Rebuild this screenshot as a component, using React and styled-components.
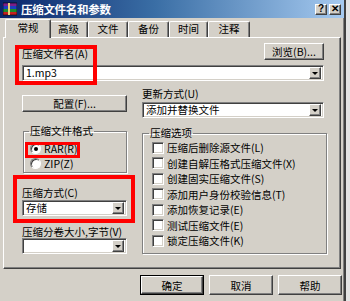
import React from 'react'
import styled, { createGlobalStyle } from 'styled-components'

const Global = createGlobalStyle`
  body {
    margin: 0;
    background: #e4e4e4;
    font-family: "Noto Sans CJK SC", "Noto Sans", sans-serif;
    font-size: 10.5px;
    color: #000;
  }
`

const raised = `
  border: 1px solid;
  border-color: #fff #404040 #404040 #fff;
  box-shadow: inset -1px -1px #808080;
`

const sunken = `
  border: 1px solid;
  border-color: #808080 #fff #fff #808080;
  box-shadow: inset 1px 1px #404040, inset -1px -1px #d4d0c8;
`

const S = {
  Window: styled.div`
    width: 346px;
    height: 301px;
    box-sizing: border-box;
    background: #d4d0c8;
    border-right: 2px solid #404040;
    box-shadow: inset -1px 0 #808080;
    overflow: hidden;
  `,
  TitleBar: styled.div`
    height: 18px;
    width: 344px;
    display: flex;
    align-items: center;
    padding: 0 3px 0 3px;
    box-sizing: border-box;
    background: linear-gradient(90deg, #0a246a 0%, #3a6ea5 45%, #a6caf0 100%);
  `,
  TitleText: styled.div`
    flex: 1;
    margin-left: 4px;
    color: #fff;
    font-weight: bold;
    font-size: 11.5px;
    line-height: 18px;
    letter-spacing: -0.3px;
  `,
  TitleBtn: styled.div`
    width: 12px;
    height: 11px;
    box-sizing: border-box;
    background: #d4d0c8;
    ${raised}
    display: flex;
    align-items: center;
    justify-content: center;
    font-family: "Liberation Sans", sans-serif;
    font-weight: bold;
    font-size: 10px;
    line-height: 1;
    margin-left: ${p => p.$gap || 0}px;
  `,
  Body: styled.div`
    padding: 0 3px;
  `,
  Tabs: styled.div`
    height: 18px;
    margin-top: 1px;
    padding-left: 4px;
    display: flex;
    align-items: flex-end;
    position: relative;
    z-index: 1;
  `,
  Tab: styled.div`
    width: ${p => p.$w}px;
    height: ${p => (p.$active ? 19 : 16)}px;
    box-sizing: border-box;
    margin: ${p => (p.$active ? '0 -2px -1px -2px' : '0')};
    padding-top: ${p => (p.$active ? 1 : 0)}px;
    background: #d4d0c8;
    border-top: 1px solid #fff;
    border-left: 1px solid #fff;
    border-right: 1px solid #404040;
    box-shadow: inset -1px 0 #808080;
    border-radius: 2px 2px 0 0;
    text-align: center;
    line-height: 14px;
    position: relative;
    z-index: ${p => (p.$active ? 2 : 0)};
  `,
  Panel: styled.div`
    position: relative;
    width: 338px;
    height: 232px;
    box-sizing: border-box;
    padding: 5px 16px 0 18px;
    border-top: 1px solid #fff;
    border-left: 1px solid #fff;
    border-right: 1px solid #404040;
    border-bottom: 1px solid #404040;
    box-shadow: inset -1px -1px #808080;
  `,
  TopRow: styled.div`
    height: 17px;
    display: flex;
    align-items: flex-end;
    justify-content: space-between;
  `,
  Label: styled.div`
    line-height: 13px;
    height: 13px;
    white-space: nowrap;
    margin-top: ${p => p.$mt || 0}px;
  `,
  Button: styled.div`
    width: ${p => p.$w}px;
    height: ${p => p.$h || 17}px;
    box-sizing: border-box;
    background: #d4d0c8;
    ${raised}
    display: flex;
    align-items: center;
    justify-content: center;
    white-space: nowrap;
    margin-top: ${p => p.$mt || 0}px;
  `,
  DefaultButton: styled.div`
    width: 64px;
    height: 20px;
    box-sizing: border-box;
    border: 1px solid #000;
    display: flex;
  `,
  DefaultInner: styled.div`
    flex: 1;
    background: #d4d0c8;
    ${raised}
    display: flex;
    align-items: center;
    justify-content: center;
  `,
  Field: styled.div`
    height: 16px;
    box-sizing: border-box;
    background: #fff;
    ${sunken}
    display: flex;
    align-items: center;
    padding: 0 2px 0 3px;
    margin-top: ${p => p.$mt || 0}px;
  `,
  FieldText: styled.div`
    flex: 1;
    white-space: nowrap;
    line-height: 14px;
  `,
  Arrow: styled.div`
    width: 12px;
    height: 12px;
    flex: none;
    box-sizing: border-box;
    background: #d4d0c8;
    ${raised}
    display: flex;
    align-items: center;
    justify-content: center;
    &::after {
      content: '';
      border-left: 3px solid transparent;
      border-right: 3px solid transparent;
      border-top: 3px solid #000;
    }
  `,
  MidRow: styled.div`
    display: grid;
    grid-template-columns: 105px 1fr;
    column-gap: 15px;
    margin-top: 6px;
    align-items: start;
  `,
  Column: styled.div`
    display: flex;
    flex-direction: column;
  `,
  LowRow: styled.div`
    display: grid;
    grid-template-columns: 105px 1fr;
    column-gap: 15px;
    margin-top: 7px;
    align-items: start;
  `,
  Group: styled.fieldset`
    margin: ${p => p.$m};
    padding: ${p => p.$p};
    min-width: 0;
    border: 1px solid #808080;
    box-shadow: inset 1px 1px #fff, 1px 1px #fff;
  `,
  Legend: styled.legend`
    padding: 0 1px;
    margin-left: ${p => p.$ml}px;
    line-height: 12px;
    height: 12px;
  `,
  Choice: styled.div`
    height: ${p => p.$h}px;
    display: flex;
    align-items: center;
    gap: 3px;
    white-space: nowrap;
  `,
  RadioBox: styled.span`
    width: 11px;
    height: 11px;
    box-sizing: border-box;
    border-radius: 50%;
    background: #fff;
    border: 1px solid;
    border-color: #808080 #fff #fff #808080;
    box-shadow: inset 1px 1px #404040;
    display: flex;
    align-items: center;
    justify-content: center;
    &::after {
      content: '';
      width: 4px;
      height: 4px;
      border-radius: 50%;
      background: ${p => (p.$on ? '#000' : 'transparent')};
    }
  `,
  CheckBox: styled.span`
    width: 12px;
    height: 12px;
    box-sizing: border-box;
    background: #fff;
    ${sunken}
    flex: none;
  `,
  Footer: styled.div`
    display: flex;
    justify-content: flex-end;
    gap: 5px;
    margin-top: 6px;
    margin-right: -1px;
    width: 339px;
  `,
  Mark: styled.div`
    position: absolute;
    left: ${p => p.$x}px;
    top: ${p => p.$y}px;
    width: ${p => p.$w}px;
    height: ${p => p.$h}px;
    box-sizing: border-box;
    border: ${p => p.$b || 3}px solid #f00;
    pointer-events: none;
  `,
}

const RarIcon = () => (
  <svg width="14" height="14" viewBox="0 0 14 14">
    <rect x="0" y="1" width="14" height="3" fill="#7a1f8a" />
    <rect x="0" y="4" width="14" height="3" fill="#1c3fbf" />
    <rect x="0" y="7" width="14" height="3" fill="#1c8a2a" />
    <rect x="0" y="10" width="14" height="3" fill="#c42020" />
    <rect x="0" y="1" width="14" height="12" fill="none" stroke="#000" strokeWidth="0.6" />
    <rect x="5" y="1" width="2" height="12" fill="#e8d27a" />
  </svg>
)

const Combo = ({ text, mt }) => (
  <S.Field $mt={mt}>
    <S.FieldText>{text}</S.FieldText>
    <S.Arrow />
  </S.Field>
)

const tabs = [
  { t: '常规', w: 42 },
  { t: '高级', w: 39 },
  { t: '文件', w: 40 },
  { t: '备份', w: 41 },
  { t: '时间', w: 39 },
  { t: '注释', w: 42 },
]

const options = [
  '压缩后删除源文件(L)',
  '创建自解压格式压缩文件(X)',
  '创建固实压缩文件(S)',
  '添加用户身份校验信息(T)',
  '添加恢复记录(E)',
  '测试压缩文件(E)',
  '锁定压缩文件(K)',
]

const App = () => (
  <>
    <Global />
    <S.Window>
      <S.TitleBar>
        <RarIcon />
        <S.TitleText>压缩文件名和参数</S.TitleText>
        <S.TitleBtn>?</S.TitleBtn>
        <S.TitleBtn $gap={2}>✕</S.TitleBtn>
      </S.TitleBar>
      <S.Body>
        <S.Tabs>
          {tabs.map((tab, i) => (
            <S.Tab key={tab.t} $w={tab.w + (i === 0 ? 4 : 0)} $active={i === 0}>
              {tab.t}
            </S.Tab>
          ))}
        </S.Tabs>
        <S.Panel>
          <S.TopRow>
            <S.Label>压缩文件名(A)</S.Label>
            <S.Button $w={60}>浏览(B)...</S.Button>
          </S.TopRow>
          <Combo text="1.mp3" mt={5} />
          <S.MidRow>
            <S.Button $w={105} $mt={8}>配置(F)...</S.Button>
            <S.Column>
              <S.Label>更新方式(U)</S.Label>
              <Combo text="添加并替换文件" mt={2} />
            </S.Column>
          </S.MidRow>
          <S.LowRow>
            <S.Column>
              <S.Group $m="0 0 0 1px" $p="4px 4px 1px 6px">
                <S.Legend $ml={-1}>压缩文件格式</S.Legend>
                <S.Choice $h={15}>
                  <S.RadioBox $on />
                  RAR(R)
                </S.Choice>
                <S.Choice $h={15}>
                  <S.RadioBox />
                  ZIP(Z)
                </S.Choice>
              </S.Group>
              <S.Label $mt={13}>压缩方式(C)</S.Label>
              <Combo text="存储" mt={1} />
              <S.Label $mt={9}>压缩分卷大小,字节(V)</S.Label>
              <Combo text="" />
            </S.Column>
            <S.Group $m="2px -3px 0 0" $p="1px 4px 4px 9px">
              <S.Legend $ml={-3}>压缩选项</S.Legend>
              {options.map(o => (
                <S.Choice key={o} $h={15.5}>
                  <S.CheckBox />
                  {o}
                </S.Choice>
              ))}
            </S.Group>
          </S.LowRow>
          <S.Mark $x={11} $y={7} $w={82} $h={40} $b={4} />
          <S.Mark $x={21} $y={104} $w={55} $h={16} />
          <S.Mark $x={9} $y={137} $w={122} $h={48} $b={4} />
        </S.Panel>
        <S.Footer>
          <S.DefaultButton>
            <S.DefaultInner>确定</S.DefaultInner>
          </S.DefaultButton>
          <S.Button $w={64} $h={20}>取消</S.Button>
          <S.Button $w={64} $h={20}>帮助</S.Button>
        </S.Footer>
      </S.Body>
    </S.Window>
  </>
)

export default App
